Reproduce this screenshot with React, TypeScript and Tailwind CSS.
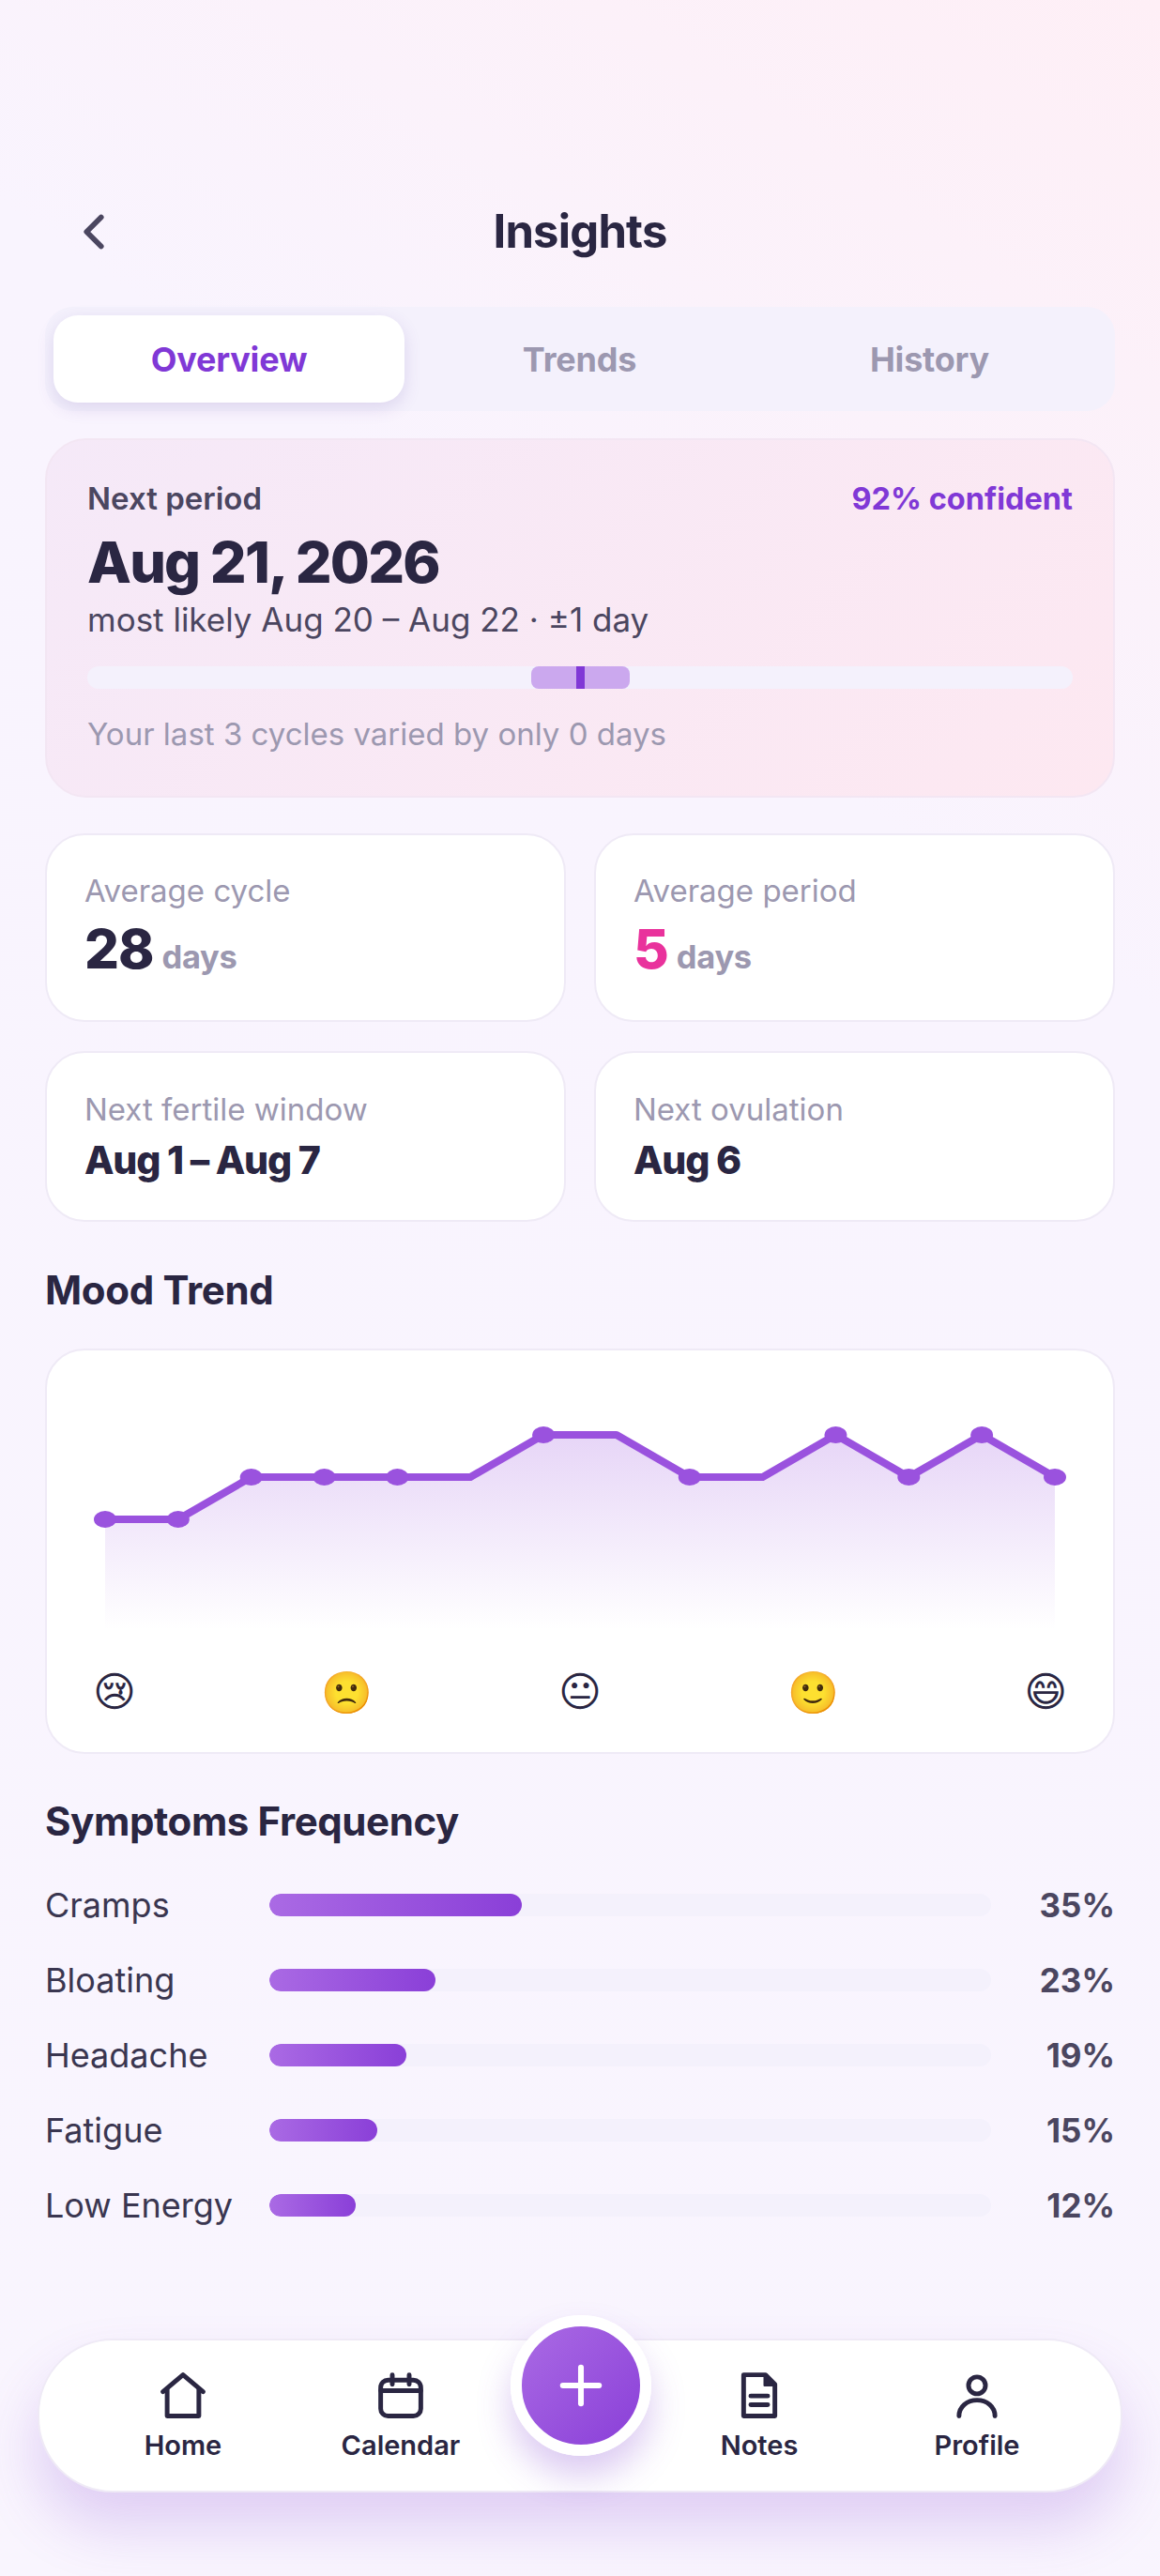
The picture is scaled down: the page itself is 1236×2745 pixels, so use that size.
import { ChevronLeft, Plus } from "lucide-react";

const STATS = [
  { label: "Average cycle", value: "28", color: "text-[#2a2642]" },
  { label: "Average period", value: "5", color: "text-[#e9329c]" },
];

const NEXT = [
  { label: "Next fertile window", value: "Aug 1 – Aug 7" },
  { label: "Next ovulation", value: "Aug 6" },
];

const SYMPTOMS = [
  { name: "Cramps", pct: 35 },
  { name: "Bloating", pct: 23 },
  { name: "Headache", pct: 19 },
  { name: "Fatigue", pct: 15 },
  { name: "Low Energy", pct: 12 },
];

// some faces come from the mono font, some from the colour one
const MOODS = [
  { face: "😢\uFE0E", mono: true },
  { face: "🙁", mono: false },
  { face: "😐\uFE0E", mono: true },
  { face: "🙂", mono: false },
  { face: "😄\uFE0E", mono: true },
];

const POINTS = [
  { y: 180, dot: true },
  { y: 180, dot: true },
  { y: 135, dot: true },
  { y: 135, dot: true },
  { y: 135, dot: true },
  { y: 135, dot: false },
  { y: 90, dot: true },
  { y: 90, dot: false },
  { y: 135, dot: true },
  { y: 135, dot: false },
  { y: 90, dot: true },
  { y: 135, dot: true },
  { y: 90, dot: true },
  { y: 135, dot: true },
];

function MoodChart() {
  const step = 1012 / 13;
  const pts = POINTS.map((p, i) => ({ x: 62 + i * step, y: p.y, dot: p.dot }));
  const line = pts.map((p) => `${p.x},${p.y}`).join(" ");
  const area = `62,298 ${line} 1074,298`;
  return (
    <svg viewBox="0 0 1134 320" className="block w-[1134px] h-[320px]">
      <defs>
        <linearGradient id="moodFill" x1="0" y1="0" x2="0" y2="1">
          <stop offset="0" stopColor="#9a52de" stopOpacity="0.24" />
          <stop offset="1" stopColor="#9a52de" stopOpacity="0" />
        </linearGradient>
      </defs>
      <polygon points={area} fill="url(#moodFill)" />
      <polyline points={line} fill="none" stroke="#9a52de" strokeWidth="8" strokeLinejoin="round" />
      {pts.filter((p) => p.dot).map((p) => (
        <ellipse key={p.x} cx={p.x} cy={p.y} rx="12" ry="9" fill="#9a52de" />
      ))}
    </svg>
  );
}

function HomeIcon() {
  return (
    <svg width="54" height="54" viewBox="0 0 24 24" fill="none" stroke="#2a2642" strokeWidth="2.2" strokeLinecap="round" strokeLinejoin="round">
      <path d="M2.500 10.500 12 2.500l9.500 8" />
      <path d="M4.500 9.500v12.500h15V9.500" />
    </svg>
  );
}

function CalendarIcon() {
  return (
    <svg width="54" height="54" viewBox="0 0 24 24" fill="none" stroke="#2a2642" strokeWidth="2.2" strokeLinecap="round" strokeLinejoin="round">
      <rect x="2.500" y="5" width="19" height="17" rx="3.500" />
      <path d="M2.500 10h19M8 2.500v4.500M16 2.500v4.500" />
    </svg>
  );
}

function NotesIcon() {
  return (
    <svg width="54" height="54" viewBox="0 0 24 24" fill="none" stroke="#2a2642" strokeWidth="2.2" strokeLinecap="round" strokeLinejoin="round">
      <path d="M4.600 2.500H15l4.400 4.500V22H4.600z" />
      <path d="M14.500 3v4.500h4.500z" fill="#2a2642" strokeWidth="1" />
      <path d="M8 12.500h8M8 16.700h8" />
    </svg>
  );
}

function ProfileIcon() {
  return (
    <svg width="54" height="54" viewBox="0 0 24 24" fill="none" stroke="#2a2642" strokeWidth="2.2" strokeLinecap="round" strokeLinejoin="round">
      <circle cx="12" cy="7.500" r="4" />
      <path d="M3.500 22c0-4.500 3.800-7.500 8.500-7.500s8.500 3 8.500 7.500" />
    </svg>
  );
}

function NavItem({ icon, label }: { icon: React.ReactNode; label: string }) {
  return (
    <div className="flex flex-col items-center w-[170px]">
      {icon}
      <span className="mt-[9px] text-[29px] leading-[36px] font-semibold text-[#2a2642]">{label}</span>
    </div>
  );
}

export default function App() {
  return (
    <div className="w-[1236px] h-[2745px] overflow-hidden flex flex-col px-[48px] bg-[linear-gradient(215deg,#feeff6_0%,#f9f4fe_30%,#f9f5fe_100%)] font-['Inter',sans-serif] text-[#2a2642]">
      <div className="mt-[212px] h-[70px] relative flex items-center justify-center">
        <ChevronLeft size={62} strokeWidth={2.2} className="absolute left-[21px] text-[#4b4660]" />
        <h1 className="text-[49px] leading-[70px] font-bold tracking-[-0.8px]">Insights</h1>
      </div>

      <div className="mt-[45px] h-[111px] rounded-[30px] bg-[#f4f1fc] p-[9px] flex">
        <div className="w-[374px] rounded-[26px] bg-white shadow-[0_6px_18px_rgba(100,70,170,0.16)] flex items-center justify-center text-[36px] font-bold tracking-[-0.2px] text-[#8038d6]">Overview</div>
        <div className="w-[373px] flex items-center justify-center text-[36px] font-bold tracking-[-0.2px] text-[#9c98b0]">Trends</div>
        <div className="w-[373px] flex items-center justify-center text-[36px] font-bold tracking-[-0.2px] text-[#9c98b0]">History</div>
      </div>

      <div className="mt-[29px] h-[383px] rounded-[44px] border-2 border-[#f3e6f3] bg-[linear-gradient(135deg,#f5e9f8,#fde8f1)] pl-[43px] pr-[43px] pt-[43px]">
        <div className="flex justify-between items-center h-[40px]">
          <span className="text-[33px] font-semibold text-[#4b4660]">Next period</span>
          <span className="text-[32.500px] font-bold text-[#8038d6]">92% confident</span>
        </div>
        <div className="mt-[12px] text-[61px] leading-[70px] font-extrabold tracking-[-1.8px]">Aug 21, 2026</div>
        <div className="mt-[4px] text-[35px] leading-[44px] text-[#4b4660]">most likely Aug 20 – Aug 22 · ±1 day</div>
        <div className="mt-[28px] h-[24px] rounded-full bg-[#f4f1fc] relative">
          <div className="absolute left-[473px] w-[105px] h-[24px] rounded-[8px] bg-[#cba8ee]" />
          <div className="absolute left-[521px] w-[9px] h-[24px] bg-[#8038d6]" />
        </div>
        <div className="mt-[26px] text-[33px] leading-[44px] text-[#9c98b0]">Your last 3 cycles varied by only 0 days</div>
      </div>

      <div className="mt-[38px] grid grid-cols-2 gap-x-[30px] gap-y-[31px]">
        {STATS.map((s) => (
          <div key={s.label} className="h-[201px] rounded-[42px] bg-white border-2 border-[#efeaf6] px-[40px] pt-[37px]">
            <div className="text-[33px] leading-[44px] text-[#9c98b0]">{s.label}</div>
            <div className="mt-[5px] flex items-baseline leading-[70px]">
              <span className={`text-[58px] font-extrabold tracking-[-1px] ${s.color}`}>{s.value}</span>
              <span className="ml-[9px] text-[34.500px] font-bold tracking-[-0.3px] text-[#9c98b0]">days</span>
            </div>
          </div>
        ))}
        {NEXT.map((s) => (
          <div key={s.label} className="h-[182px] rounded-[42px] bg-white border-2 border-[#efeaf6] px-[40px] pt-[38px]">
            <div className="text-[33px] leading-[44px] text-[#9c98b0]">{s.label}</div>
            <div className="mt-[4px] text-[41px] leading-[56px] font-extrabold tracking-[-1.2px]">{s.value}</div>
          </div>
        ))}
      </div>

      <h2 className="mt-[48px] text-[42px] leading-[50px] font-bold tracking-[-0.3px]">Mood Trend</h2>

      <div className="mt-[37px] h-[432px] rounded-[42px] bg-white border-2 border-[#efeaf6] overflow-hidden">
        <MoodChart />
        <div className="mt-[14px] px-[49px] flex justify-between items-center h-[60px]">
          {MOODS.map((m) => (
            <span key={m.face} className={m.mono ? "text-[44px] leading-[60px] font-['DejaVu_Sans']" : "text-[44px] leading-[60px]"}>{m.face}</span>
          ))}
        </div>
      </div>

      <h2 className="mt-[47px] text-[42px] leading-[50px] font-bold tracking-[-0.4px]">Symptoms Frequency</h2>

      <div className="mt-[44px] flex flex-col gap-[40px]">
        {SYMPTOMS.map((s) => (
          <div key={s.name} className="h-[40px] flex items-center">
            <span className="w-[239px] text-[36px] text-[#3a3650]">{s.name}</span>
            <div className="w-[769px] h-[24px] rounded-full bg-[#f4f1fc] overflow-hidden">
              <div className="h-full rounded-full bg-[linear-gradient(90deg,#aa6ae4,#8a3fd8)]" style={{ width: `${s.pct}%` }} />
            </div>
            <span className="flex-1 text-right text-[35px] font-bold text-[#4b4660]">{s.pct}%</span>
          </div>
        ))}
      </div>

      <div className="mt-[122px] -mx-[8px] h-[164px] rounded-[80px] bg-white border-2 border-[#efeaf6] shadow-[0_36px_60px_rgba(130,70,210,0.22)] relative flex items-center justify-between px-[68px]">
        <div className="flex gap-[62px]">
          <NavItem icon={<HomeIcon />} label="Home" />
          <NavItem icon={<CalendarIcon />} label="Calendar" />
        </div>
        <div className="flex gap-[62px]">
          <NavItem icon={<NotesIcon />} label="Notes" />
          <NavItem icon={<ProfileIcon />} label="Profile" />
        </div>
        <div className="absolute left-[502px] -top-[27px] w-[150px] h-[150px] rounded-full border-[12px] border-white bg-[linear-gradient(135deg,#aa6ae4,#8a3fd8)] shadow-[0_22px_36px_rgba(130,70,210,0.28)] flex items-center justify-center">
          <Plus size={66} strokeWidth={2.2} className="text-white" />
        </div>
      </div>
    </div>
  );
}
